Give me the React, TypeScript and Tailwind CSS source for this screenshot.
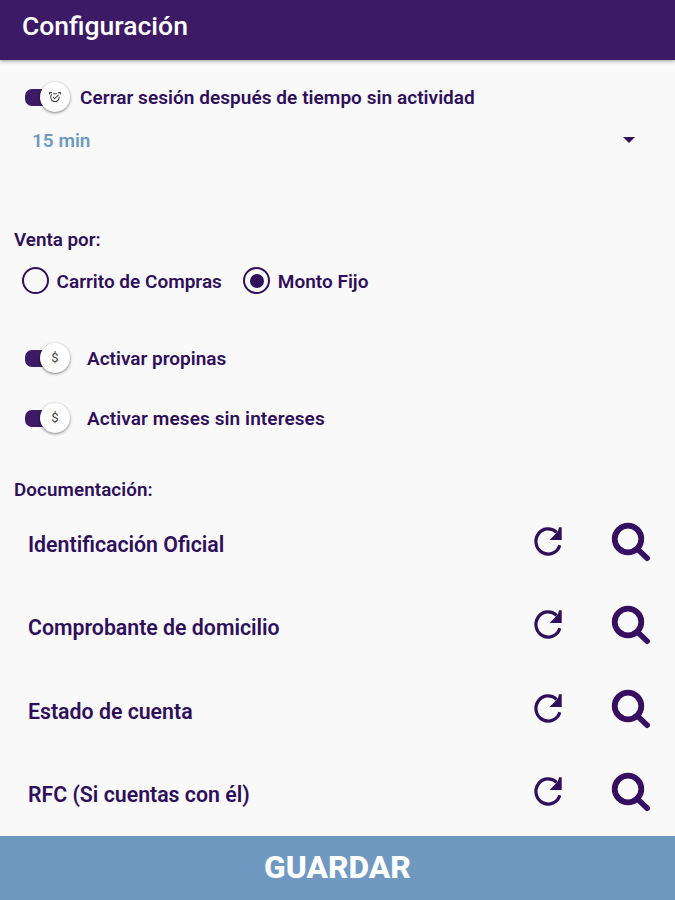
import type { ReactNode } from "react";

const documents = [
  "Identificación Oficial",
  "Comprobante de domicilio",
  "Estado de cuenta",
  "RFC (Si cuentas con él)",
];

function ClockIcon() {
  return (
    <svg viewBox="0 0 14 14" className="w-3.5 h-3.5" fill="none" stroke="#444" strokeWidth="1.1">
      <path d="M3.7 4.4 A4.3 4.3 0 1 0 11.2 6.6 M5 3.7 H9.2 M1.6 4.6 V2.6 H4 M12.4 4.6 V2.6 H10 M5 7 L6.6 8.6 L10.6 4.8" />
    </svg>
  );
}

function RefreshIcon() {
  return (
    <svg viewBox="0 0 40 40" className="w-10 h-10" fill="none" stroke="#2f0f5a" strokeWidth="3.2">
      <path d="M31.8 24.2 A12.2 12.6 0 1 1 28.6 11.4" />
      <path d="M33.7 6.2 V19 H21.6 L26 14.4 L30 10 L31 6.2 Z" fill="#2f0f5a" stroke="none" />
    </svg>
  );
}

function SearchIcon() {
  return (
    <svg viewBox="0 0 40 40" className="w-10 h-10" fill="none" stroke="#360f60" strokeLinecap="round">
      <circle cx="17" cy="17" r="13.3" strokeWidth="5.8" />
      <path d="M27 27.5 L36.2 36.2" strokeWidth="5.6" />
    </svg>
  );
}

function Toggle({ children }: { children: ReactNode }) {
  return (
    <button className="relative w-[46px] h-[30px] flex items-center font-normal">
      <span className="w-[36px] h-[17px] rounded-[7px] bg-[#3d1a66] ml-px" />
      <span className="absolute right-0 top-0 w-[30px] h-[30px] rounded-full bg-white shadow-[0_1px_3px_rgba(0,0,0,0.5)] flex items-center justify-center text-[13px] text-[#444]">
        {children}
      </span>
    </button>
  );
}

function Radio({ label, checked }: { label: string; checked?: boolean }) {
  return (
    <label className="flex items-center gap-[7.5px]">
      <span className="w-[27px] h-[27px] rounded-full border-[2.5px] border-[#2f0f5a] flex items-center justify-center">
        {checked && <span className="w-[14px] h-[14px] rounded-full bg-[#2f0f5a]" />}
      </span>
      <span className="pt-0.5">{label}</span>
    </label>
  );
}

export default function App() {
  return (
    <div className="h-[900px] flex flex-col bg-[#f9f9f9] text-[#2f0f5a] font-['Roboto',sans-serif] font-semibold text-[19px] leading-6">
      {/* Header */}
      <header className="h-[60px] shrink-0 bg-[#3d1a66] text-white text-[26.5px] font-medium leading-[52px] pl-[22px] shadow-[0_1px_4px_rgba(0,0,0,0.4)]">
        Configuración
      </header>

      <main className="flex-1 flex flex-col">
        <div className="flex items-center gap-2.5 mt-[22px] pl-6 h-[30px]">
          <Toggle>
            <ClockIcon />
          </Toggle>
          <span className="pt-px tracking-[0.05px]">Cerrar sesión después de tiempo sin actividad</span>
        </div>
        <div className="flex items-center justify-between mt-[17px] pl-8 pr-10 text-[#7099c2]">
          15 min
          <span className="border-x-[6px] border-t-[6px] border-x-transparent border-t-[#2f0f5a] mb-0.5" />
        </div>

        {/* Sale type */}
        <p className="mt-[75px] pl-3.5 text-[18.8px]">Venta por:</p>
        <div className="flex items-center gap-[21.5px] mt-[15px] h-[27px] pl-[22px]">
          <Radio label="Carrito de Compras" />
          <Radio label="Monto Fijo" checked />
        </div>

        <div className="flex items-center gap-[17px] mt-[49px] pl-6 h-[30px]">
          <Toggle>$</Toggle>
          <span className="pt-px">Activar propinas</span>
        </div>
        <div className="flex items-center gap-[17px] mt-[30px] pl-6 h-[30px]">
          <Toggle>$</Toggle>
          <span className="pt-px tracking-[0.1px]">Activar meses sin intereses</span>
        </div>

        {/* Documents */}
        <p className="mt-[45px] pl-3.5 text-[18.8px] tracking-[0.1px]">Documentación:</p>
        {documents.map((name) => (
          <div key={name} className="h-[83.5px] flex items-center pl-7 pr-6 text-[21.3px]">
            <span className="flex-1 pt-0.5">{name}</span>
            <span className="mr-[43px] pb-1.5">
              <RefreshIcon />
            </span>
            <span className="pb-1">
              <SearchIcon />
            </span>
          </div>
        ))}
      </main>

      <button className="h-16 shrink-0 bg-[#7099c2] text-white text-[31.8px] font-extrabold pb-0.5">GUARDAR</button>
    </div>
  );
}
